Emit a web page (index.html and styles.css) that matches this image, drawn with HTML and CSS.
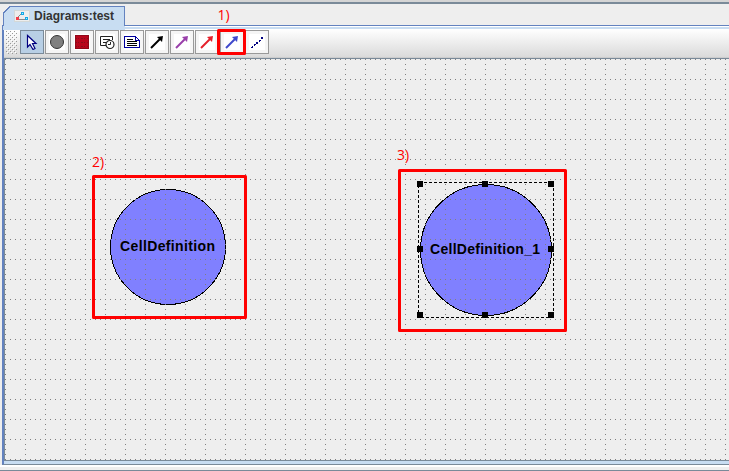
FILE: index.html
```html
<!DOCTYPE html>
<html lang="en">
<head>
<meta charset="utf-8">
<title>Diagrams:test</title>
<link rel="stylesheet" href="styles.css">
</head>
<body>
<div class="window">
  <header class="tabs">
    <svg class="tab-shape" width="122" height="24" shape-rendering="crispEdges">
      <path d="M0 24V7L7 0H122V24Z" fill="#c8ddf2"/>
      <path class="edge" d="M.5 20V7L7 .5H121.5V20"/>
    </svg>
    <div class="tab">
      <svg class="tab-icon" width="16" height="12" shape-rendering="crispEdges">
        <rect x=".5" y=".5" width="15" height="11" fill="#eee" stroke="#d3d8d8"/>
        <path d="M3 8L8 3M3 9H13" stroke="#888" fill="none"/>
        <path d="M2 7h3v3H2z" fill="#f33f4b"/>
        <path d="M7 2h3v3H7zM11 7h3v3h-3z" fill="#19a5e6"/>
        <path d="M8 3h1v1H8zM12 8h1v1h-1z" fill="#9ff"/>
      </svg>
      <span>Diagrams:test</span>
    </div>
  </header>
  <main class="panel">
    <nav class="toolbar">
      <svg class="grip" width="11" height="24" shape-rendering="crispEdges">
        <defs><pattern id="bumps" width="4" height="4" patternUnits="userSpaceOnUse">
          <path d="M0 1h1v1H0zM2 3h1v1H2z" fill="#999"/><path d="M1 2h1v1H1zM3 0h1v1H3z" fill="#fff"/>
        </pattern></defs>
        <rect width="11" height="24" fill="url(#bumps)"/>
      </svg>
      <button class="tool selected"><svg width="16" height="16"><path d="M3.5 1.5V13L6 10.5L9 15.5L11 14.5L8.5 9.5H12Z" fill="#fff" stroke="#000080" stroke-width="1.2"/></svg></button>
      <button class="tool"><svg width="16" height="16"><circle cx="8" cy="8" r="6.5" fill="#808080" stroke="#333"/></svg></button>
      <button class="tool"><svg width="16" height="16" shape-rendering="crispEdges"><rect x="1" y="1" width="14" height="14" fill="#b9061c"/><path d="M1 4H15M1 8H15M1 12H15" stroke="#87101c" stroke-dasharray="2 1 1 2"/><path d="M1.5 1.5H14.5V14.5H1.5Z" fill="none" stroke="#900818"/></svg></button>
      <button class="tool"><svg width="16" height="16"><path d="M7 11.5H1.5V2.5H13.5V6M4 5.5H11M4 8.5H7" fill="none" stroke="#222"/><circle cx="11" cy="10.5" r="4" fill="#fff" stroke="#222" stroke-width="1.2"/><path d="M11.5 8V10.5H9" fill="none" stroke="#222"/></svg></button>
      <button class="tool"><svg width="16" height="16" shape-rendering="crispEdges"><path d="M.5 2.5H11.5L15.5 6.5V13.5H.5Z" fill="#fff" stroke="#0000a0"/><path d="M11.5 2.5V6.5H15" fill="none" stroke="#0000a0"/><path d="M3 5.5H9M3 7.5H13M3 9.5H13M3 11.5H13" stroke="#000"/></svg></button>
      <button class="tool"><svg class="arrow black" width="16" height="16"><path d="M2 14L11 5"/><path class="head" d="M8 3L14 2L13 8Z"/></svg></button>
      <button class="tool"><svg class="arrow purple" width="16" height="16"><path d="M2 14L11 5"/><path class="head" d="M8 3L14 2L13 8Z"/></svg></button>
      <button class="tool"><svg class="arrow red" width="16" height="16"><path d="M2 14L11 5"/><path class="head" d="M8 3L14 2L13 8Z"/></svg></button>
      <button class="tool"><svg class="arrow blue" width="16" height="16"><path d="M2 14L11 5"/><path class="head" d="M8 3L14 2L13 8Z"/></svg></button>
      <button class="tool"><svg width="16" height="16" shape-rendering="crispEdges"><path d="M2 13h2v1H2zM3 12h1v1H3zM5 10h2v1H5zM5 11h1v1H5zM7 8h2v2H7zM10 6h2v1h-2zM10 7h1v1h-1zM12 3h2v2h-2z" fill="#000080"/></svg></button>
    </nav>
    <section class="canvas">
      <svg class="grid" width="724" height="401" viewBox="0 1 724 401" shape-rendering="crispEdges">
        <defs><pattern id="grid" width="20" height="20" patternUnits="userSpaceOnUse">
          <path d="M0 1h1v1H0zM5 1h1v1H5zM10 1h1v1h-1zM15 1h1v1h-1zM0 6h1v1H0zM0 11h1v1H0zM0 16h1v1H0z" fill="#808080"/>
        </pattern></defs>
        <circle cx="163" cy="189" r="57.5" class="cell"/>
        <circle cx="481" cy="192" r="65.5" class="cell"/>
        <rect width="724" height="402" fill="url(#grid)"/>
        <g class="names">
          <text x="115" y="193" textLength="95">CellDefinition</text>
          <text x="425" y="196" textLength="110">CellDefinition_1</text>
        </g>
        <rect x="413.5" y="124.5" width="135" height="135" class="selection"/>
        <path d="M412 123h6v6h-6zM477 123h6v6h-6zM543 123h6v6h-6zM412 188h6v6h-6zM543 188h6v6h-6zM412 254h6v6h-6zM477 254h6v6h-6zM543 254h6v6h-6z"/>
      </svg>
    </section>
  </main>
  <footer class="bottom"></footer>
  <svg class="notes" width="729" height="471">
    <g class="marks">
      <rect x="218.5" y="30.5" width="26" height="23"/>
      <rect x="93.5" y="176.5" width="152" height="141"/>
      <rect x="399.5" y="170.5" width="166" height="160"/>
    </g>
    <g class="labels">
      <text x="217.5" y="20">1)</text>
      <text x="92" y="167">2)</text>
      <text x="397" y="160">3)</text>
    </g>
  </svg>
</div>
</body>
</html>
```
FILE: styles.css
```css
* { box-sizing: border-box; }
body { margin: 0; overflow: hidden; background: #eee; font-family: "Liberation Sans", Arial, sans-serif; }
.window { position: relative; width: 729px; height: 471px; border-top: 2px solid #d5d5d5; display: flex; flex-direction: column; }
.tabs { height: 23px; border-top: 2px solid #7a8a99; padding: 2px 0 0 4px; position: relative; }
.tab-shape { position: absolute; left: 3px; top: 2px; z-index: 1; }
.edge { fill: none; stroke: #6382bf; }
.tab { position: relative; z-index: 2; display: flex; align-items: center; gap: 4px; height: 19px; padding-left: 10px; font-size: 12px; font-weight: bold; color: #333; }
.panel { height: 440px; margin-left: 2px; border: solid #6382bf; border-width: 1px 0 1px 2px; border-bottom-color: #7a8a99; padding: 3px 0 2px; background: linear-gradient(#fff 1px, #c8ddf2 1px); }
.toolbar { height: 29px; display: flex; align-items: flex-start; padding: 1px 0 0 2px; background: linear-gradient(#fff, #dadada); border-bottom: 1px solid #ccc; }
.grip { margin-right: 3px; }
.tool { width: 24px; height: 24px; margin-right: 1px; padding: 0; border: 1px solid #999; background: #f5f5f5; display: flex; align-items: center; justify-content: center; }
.tool svg { background: #fff; }
.selected { background: #b8cfe5; border-color: #7a8a99; }
.tool.selected svg { background: none; }
.arrow { fill: none; stroke: currentColor; stroke-width: 2; }
.arrow .head { fill: currentColor; stroke: none; }
.black { color: #000; }
.purple { color: #993faa; }
.red { color: #e5202b; }
.blue { color: #3f48cc; }
.canvas { height: 403px; border: solid #7a8a99; border-width: 1px 0 1px 1px; background: #eee; }
.grid { display: block; }
.cell { fill: #8080ff; stroke: #000; }
.names { font-size: 14px; font-weight: bold; }
.selection { fill: none; stroke: #000; stroke-dasharray: 3 2; }
.bottom { height: 6px; background: linear-gradient(#fff 2px, #eee 2px, #eee 5px, #7a8a99 5px); }
.notes { position: absolute; left: 0; top: -2px; pointer-events: none; }
.marks { fill: none; stroke: #f00; stroke-width: 3; stroke-linejoin: round; }
.labels { fill: #f00; font-family: "Open Sans", "Noto Sans", sans-serif; font-size: 14px; }
```
